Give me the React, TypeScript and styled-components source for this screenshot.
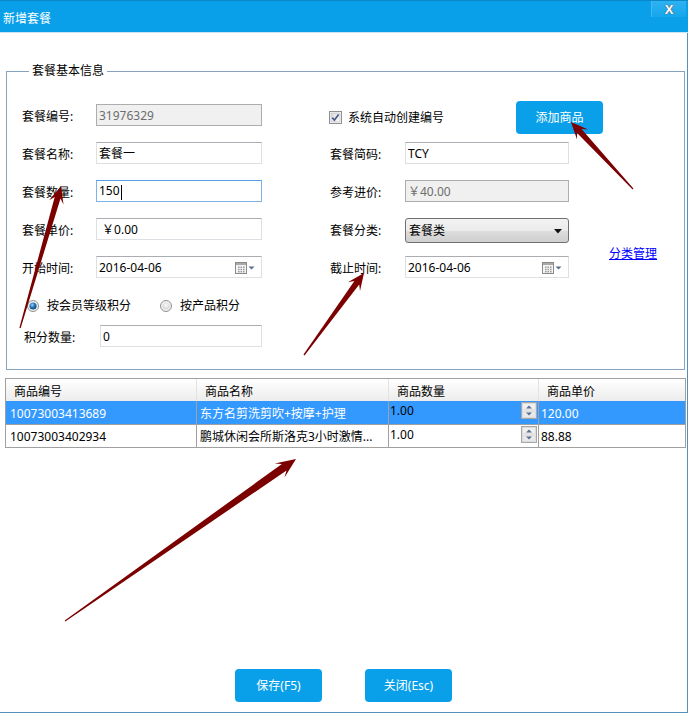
import React from "react";
import styled, { createGlobalStyle } from "styled-components";

const GlobalStyle = createGlobalStyle`
  html, body { margin: 0; padding: 0; background: #fff; }
  body {
    font-family: "Noto Sans", "Noto Sans CJK SC", sans-serif;
    font-size: 12px;
    color: #000;
  }
  * { box-sizing: border-box; }
`;

const Window = styled.div`
  position: relative;
  width: 688px;
  height: 713px;
  display: flex;
  flex-direction: column;
  background: #fff;
  border-right: 1px solid #5590bb;
  border-bottom: 1px solid #5590bb;
`;

const TitleBar = styled.div`
  flex: none;
  height: 33px;
  margin-right: -1px;
  display: flex;
  justify-content: space-between;
  align-items: flex-start;
  background: #0aa0e9;
  border-top: 1px solid #0a88c8;
  border-bottom: 1px solid #c6e5f5;
`;

const Title = styled.span`
  color: #fff;
  line-height: 16px;
  padding: 10px 0 0 3px;
`;

const CloseBtn = styled.div`
  width: 35px;
  height: 16px;
  margin-right: 2px;
  display: flex;
  align-items: center;
  justify-content: center;
  background: linear-gradient(#2eb2f1, #16a6ec);
  border-left: 1px solid #45b9f0;
  color: #fff;
  font-family: "Liberation Sans", sans-serif;
  font-weight: bold;
  font-size: 13px;
  text-shadow: 0 0 1px #555, 0 0 1px #555;
`;

const Body = styled.div`
  flex: 1;
  display: flex;
  flex-direction: column;
`;

const Group = styled.fieldset`
  margin: 30px 2px 0 6px;
  padding: 25px 0 22px 15px;
  border: 1px solid #86a4bf;
  min-width: 0;
`;

const Legend = styled.legend`
  margin-left: 7px;
  padding: 0 3px;
  line-height: 16px;
`;

const FormGrid = styled.div`
  display: grid;
  grid-template-columns: 74px 166px 68px 75px 164px 1fr;
  grid-template-rows: repeat(5, 22px);
  row-gap: 16px;
  align-items: center;
`;

const Label = styled.span<{ $right?: boolean }>`
  grid-column: ${(p) => (p.$right ? 4 : 1)};
  line-height: 16px;
  padding-top: 4px;
  white-space: nowrap;
`;

const Field = styled.div<{ $disabled?: boolean; $focused?: boolean }>`
  height: 22px;
  width: 100%;
  display: flex;
  align-items: center;
  justify-content: space-between;
  padding: 1px 6px 0 2px;
  line-height: 16px;
  white-space: nowrap;
  background: ${(p) => (p.$disabled ? "#f0f0f0" : "#fff")};
  color: ${(p) => (p.$disabled ? "#6d6d6d" : "#000")};
  border: 1px solid
    ${(p) => (p.$focused ? "#7eb4ea" : p.$disabled ? "#adadad" : "#dcdfe3")};
  border-top-color: ${(p) =>
    p.$focused ? "#569de5" : p.$disabled ? "#adadad" : "#abadb3"};
`;

const Caret = styled.span`
  display: inline-block;
  width: 1px;
  height: 15px;
  background: #000;
  vertical-align: middle;
  margin-left: 1px;
`;

const CheckArea = styled.div`
  grid-column: 4 / span 3;
  display: flex;
  align-items: center;
  margin: 5px 0 0 -1px;
`;

const CheckLabel = styled.label`
  width: 187px;
  display: flex;
  align-items: center;
  gap: 6px;
  line-height: 16px;
`;

const BlueButton = styled.div<{ $w?: number }>`
  width: ${(p) => p.$w ?? 87}px;
  height: 33px;
  display: flex;
  align-items: center;
  justify-content: center;
  background: #0aa0e9;
  border-radius: 4px;
  color: #fff;
  line-height: 16px;
`;

const Select = styled.div`
  align-self: start;
  height: 25px;
  display: flex;
  align-items: center;
  justify-content: space-between;
  padding: 1px 6px 0 3px;
  border: 1px solid #707070;
  border-radius: 3px;
  background: linear-gradient(#f3f3f3, #ebebeb 50%, #dddddd 51%, #cfcfcf);
  line-height: 16px;
`;

const LinkCell = styled.div`
  grid-column: 6;
  grid-row: 4 / span 2;
  align-self: center;
  padding: 10px 0 0 40px;
`;

const Link = styled.a`
  color: #0000ff;
  text-decoration: underline;
  line-height: 16px;
`;

const RadioRow = styled.div`
  display: flex;
  align-items: center;
  margin: 20px 0 0 5px;
  height: 16px;
`;

const RadioItem = styled.label<{ $gap?: number }>`
  display: flex;
  align-items: center;
  gap: 8px;
  margin-right: ${(p) => p.$gap ?? 0}px;
  line-height: 16px;
`;

const PointsRow = styled.div`
  display: flex;
  align-items: center;
  margin: 11px 0 0 2px;
`;

const PointsLabel = styled.span`
  width: 76px;
  line-height: 16px;
  padding-top: 4px;
`;

const PointsField = styled(Field)`
  width: 162px;
`;

const Table = styled.div`
  margin: 8px 0 0 5px;
  width: 681px;
  display: grid;
  grid-template-columns: 190px 192px 150px 147px;
  border: 1px solid #a0a0a0;
`;

const HeadCell = styled.div<{ $first?: boolean }>`
  height: 22px;
  line-height: 16px;
  padding: 5px 0 0 8px;
  background: linear-gradient(#ffffff, #f4f4f4 60%, #ececec);
  border-left: ${(p) => (p.$first ? "none" : "1px solid #e2e2e2")};
  white-space: nowrap;
`;

const Cell = styled.div<{ $first?: boolean; $sel?: boolean; $h: number; $line?: boolean; $pad?: number }>`
  height: ${(p) => p.$h}px;
  display: flex;
  align-items: center;
  justify-content: space-between;
  padding: 2px 1px 0 ${(p) => p.$pad ?? 3}px;
  background: ${(p) => (p.$sel ? "#3399ff" : "#fff")};
  color: ${(p) => (p.$sel ? "#fff" : "#000")};
  border-left: ${(p) => (p.$first ? "none" : "1px solid #a0a0a0")};
  border-bottom: ${(p) => (p.$line ? "1px solid #a0a0a0" : "none")};
  white-space: nowrap;
  overflow: hidden;
  line-height: 16px;
`;

const QtyCell = styled(Cell)`
  align-items: flex-start;
  padding-top: 1px;
`;

const QtyText = styled.span`
  color: #000;
  padding-top: 1px;
`;

const ButtonBar = styled.div`
  margin-top: auto;
  padding-bottom: 10px;
  display: flex;
  justify-content: center;
  gap: 43px;
`;

const Overlay = styled.svg`
  position: absolute;
  left: 0;
  top: 0;
  pointer-events: none;
`;

function CheckBox() {
  return (
    <svg width="13" height="13" viewBox="0 0 13 13">
      <defs>
        <linearGradient id="cbg" x1="0" y1="0" x2="1" y2="1">
          <stop offset="0" stopColor="#dcdcdc" />
          <stop offset="1" stopColor="#fbfbfb" />
        </linearGradient>
      </defs>
      <rect x="0.5" y="0.5" width="12" height="12" fill="#fff" stroke="#8e8f8f" />
      <rect x="2" y="2" width="9" height="9" fill="url(#cbg)" stroke="#b0b4bb" strokeWidth="0.6" />
      <path d="M3.3 6.6 L5.4 9.2 L9.6 3.4" fill="none" stroke="#4a5b8c" strokeWidth="1.7" />
    </svg>
  );
}

function Radio({ on }: { on?: boolean }) {
  return (
    <svg width="12" height="12" viewBox="0 0 12 12">
      <defs>
        <radialGradient id="rOn" cx="0.4" cy="0.35" r="0.7">
          <stop offset="0" stopColor="#9fd4f6" />
          <stop offset="0.45" stopColor="#2a7cc0" />
          <stop offset="1" stopColor="#0d3f73" />
        </radialGradient>
        <radialGradient id="rOff" cx="0.5" cy="0.4" r="0.6">
          <stop offset="0" stopColor="#fafafa" />
          <stop offset="1" stopColor="#d2d2d2" />
        </radialGradient>
      </defs>
      <circle cx="6" cy="6" r="5.5" fill="#f2f2f2" stroke="#8e8f8f" />
      <circle cx="6" cy="6" r="3.6" fill={on ? "url(#rOn)" : "url(#rOff)"} />
    </svg>
  );
}

function CalendarIcon() {
  return (
    <svg width="20" height="12" viewBox="0 0 20 12">
      <rect x="0.5" y="0.5" width="11" height="11" fill="#f4f4f4" stroke="#8a8a8a" />
      <rect x="1" y="1" width="10" height="2" fill="#a9a9a9" />
      {[3, 5.5, 8].map((x) =>
        [4.5, 6.8, 9].map((y) => (
          <rect key={`${x}-${y}`} x={x} y={y} width="1.6" height="1.4" fill="#9a9a9a" />
        ))
      )}
      <path d="M13.5 4.5 L19.5 4.5 L16.5 7.5 Z" fill="#5a6d8c" />
    </svg>
  );
}

function SelectArrow() {
  return (
    <svg width="8" height="5" viewBox="0 0 8 5">
      <path d="M0 0 L8 0 L4 4.5 Z" fill="#111" />
    </svg>
  );
}

function Spinner() {
  return (
    <svg width="16" height="17" viewBox="0 0 16 17">
      <rect x="0.5" y="0.5" width="15" height="16" fill="#fff" stroke="#a8a8a8" />
      <rect x="1.5" y="1.5" width="13" height="6.5" fill="#f0f0f0" stroke="#c9c9c9" strokeWidth="0.6" />
      <rect x="1.5" y="9" width="13" height="6.5" fill="#e9e9e9" stroke="#c9c9c9" strokeWidth="0.6" />
      <path d="M5 6.5 L11 6.5 L8 3.5 Z" fill="#5b6f92" />
      <path d="M5 10.5 L11 10.5 L8 13.5 Z" fill="#5b6f92" />
    </svg>
  );
}

type ArrowSpec = { x1: number; y1: number; x2: number; y2: number; shaft: number; head: number; hw: number };

function arrowPoints(a: ArrowSpec) {
  const dx = a.x2 - a.x1;
  const dy = a.y2 - a.y1;
  const len = Math.hypot(dx, dy);
  const ux = dx / len;
  const uy = dy / len;
  const nx = -uy;
  const ny = ux;
  const bx = a.x2 - ux * a.head;
  const by = a.y2 - uy * a.head;
  const jx = a.x2 - ux * a.head * 0.72;
  const jy = a.y2 - uy * a.head * 0.72;
  const pts = [
    [a.x1 + nx * 0.6, a.y1 + ny * 0.6],
    [jx + (nx * a.shaft) / 2, jy + (ny * a.shaft) / 2],
    [bx + (nx * a.hw) / 2, by + (ny * a.hw) / 2],
    [a.x2, a.y2],
    [bx - (nx * a.hw) / 2, by - (ny * a.hw) / 2],
    [jx - (nx * a.shaft) / 2, jy - (ny * a.shaft) / 2],
    [a.x1 - nx * 0.6, a.y1 - ny * 0.6],
  ];
  return pts.map((p) => `${p[0].toFixed(1)},${p[1].toFixed(1)}`).join(" ");
}

const arrows: ArrowSpec[] = [
  { x1: 20, y1: 328, x2: 61, y2: 186, shaft: 6, head: 17, hw: 15 },
  { x1: 633, y1: 189, x2: 571, y2: 122, shaft: 6, head: 17, hw: 15 },
  { x1: 304, y1: 355, x2: 364, y2: 273, shaft: 6, head: 17, hw: 15 },
  { x1: 65, y1: 621, x2: 296, y2: 459, shaft: 8, head: 20, hw: 17 },
];

const rows = [
  { id: "10073003413689", name: "东方名剪洗剪吹+按摩+护理", qty: "1.00", price: "120.00", sel: true, h: 24 },
  { id: "10073003402934", name: "鹏城休闲会所斯洛克3小时激情...", qty: "1.00", price: "88.88", sel: false, h: 22 },
];

export default function App() {
  return (
    <>
      <GlobalStyle />
      <Window>
        <TitleBar>
          <Title>新增套餐</Title>
          <CloseBtn>X</CloseBtn>
        </TitleBar>
        <Body>
          <Group>
            <Legend>套餐基本信息</Legend>
            <FormGrid>
              <Label>套餐编号:</Label>
              <Field $disabled>31976329</Field>
              <CheckArea>
                <CheckLabel>
                  <CheckBox />
                  系统自动创建编号
                </CheckLabel>
                <BlueButton>添加商品</BlueButton>
              </CheckArea>

              <Label>套餐名称:</Label>
              <Field>套餐一</Field>
              <Label $right>套餐简码:</Label>
              <Field>TCY</Field>

              <Label>套餐数量:</Label>
              <Field $focused>
                <span>
                  150
                  <Caret />
                </span>
              </Field>
              <Label $right>参考进价:</Label>
              <Field $disabled>￥40.00</Field>

              <Label>套餐单价:</Label>
              <Field>&nbsp;￥0.00</Field>
              <Label $right>套餐分类:</Label>
              <Select>
                <span>套餐类</span>
                <SelectArrow />
              </Select>

              <Label>开始时间:</Label>
              <Field>
                <span>2016-04-06</span>
                <CalendarIcon />
              </Field>
              <Label $right>截止时间:</Label>
              <Field>
                <span>2016-04-06</span>
                <CalendarIcon />
              </Field>

              <LinkCell>
                <Link>分类管理</Link>
              </LinkCell>
            </FormGrid>

            <RadioRow>
              <RadioItem $gap={29}>
                <Radio on />
                按会员等级积分
              </RadioItem>
              <RadioItem>
                <Radio />
                按产品积分
              </RadioItem>
            </RadioRow>

            <PointsRow>
              <PointsLabel>积分数量:</PointsLabel>
              <PointsField>0</PointsField>
            </PointsRow>
          </Group>

          <Table>
            <HeadCell $first>商品编号</HeadCell>
            <HeadCell>商品名称</HeadCell>
            <HeadCell>商品数量</HeadCell>
            <HeadCell>商品单价</HeadCell>
            {rows.map((r, i) => (
              <React.Fragment key={r.id}>
                <Cell $first $sel={r.sel} $h={r.h} $line={i === 0} $pad={4}>
                  {r.id}
                </Cell>
                <Cell $sel={r.sel} $h={r.h} $line={i === 0}>
                  {r.name}
                </Cell>
                <QtyCell $sel={r.sel} $h={r.h} $line={i === 0} $pad={1}>
                  <QtyText>{r.qty}</QtyText>
                  <Spinner />
                </QtyCell>
                <Cell $sel={r.sel} $h={r.h} $line={i === 0} $pad={2}>
                  {r.price}
                </Cell>
              </React.Fragment>
            ))}
          </Table>

          <ButtonBar>
            <BlueButton>保存(F5)</BlueButton>
            <BlueButton>关闭(Esc)</BlueButton>
          </ButtonBar>
        </Body>

        <Overlay width="689" height="713" viewBox="0 0 689 713">
          {arrows.map((a, i) => (
            <polygon key={i} points={arrowPoints(a)} fill="#7b0000" />
          ))}
        </Overlay>
      </Window>
    </>
  );
}
